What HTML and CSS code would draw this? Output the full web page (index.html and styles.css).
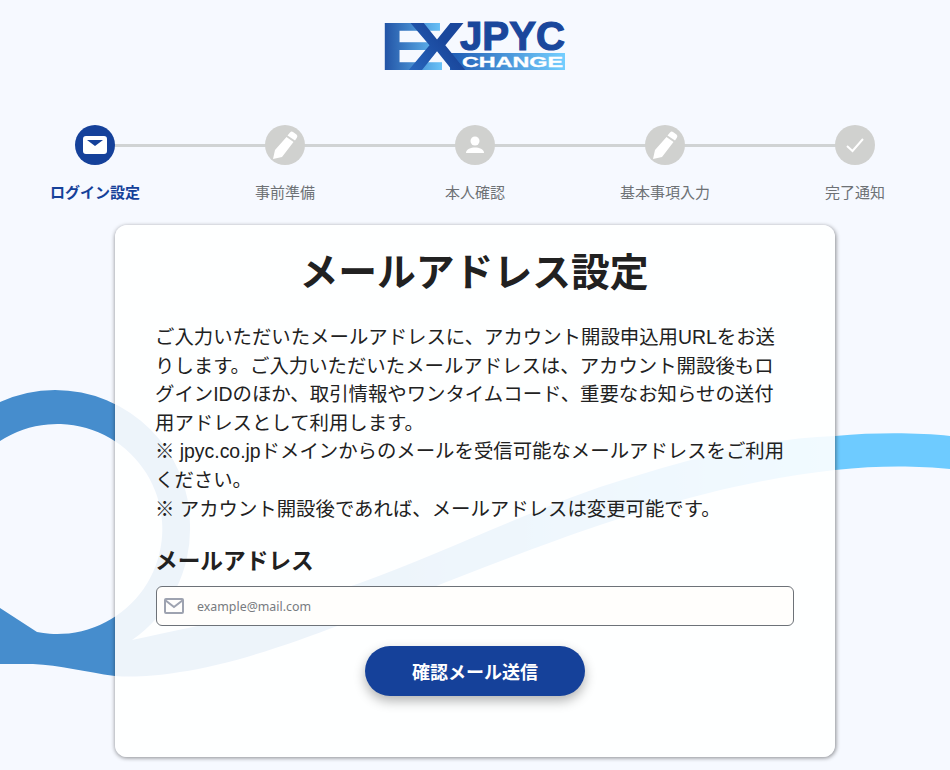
FILE: index.html
```html
<!DOCTYPE html>
<html lang="ja">
<head>
    <meta charset="UTF-8">
    <meta name="viewport" content="width=device-width, initial-scale=1.0">
    <title>メールアドレス設定</title>
    <link rel="stylesheet" href="styles.css">
</head>
<body>
    <svg class="swirl" width="950" height="770" viewBox="0 0 950 770">
        <defs>
            <linearGradient id="swirlFill" gradientUnits="userSpaceOnUse" x1="300" y1="0" x2="835" y2="0">
                <stop offset="0" stop-color="#468dcd"/>
                <stop offset="1" stop-color="#6ecbff"/>
            </linearGradient>
        </defs>
        <path fill="url(#swirlFill)" fill-rule="evenodd" d="M0 402A135 135 0 0 1 55 390A135 135 0 0 1 190 525A135 135 0 0 1 132 640C200 625 290 608 360 583C440 554 520 515 600 487C680 462 760 438 835 436C880 432 920 433 950 436V469C920 466 880 465 835 470C760 478 680 498 600 525C520 552 420 592 340 625C290 644 230 665 180 672C150 677 130 677 115 676C85 672 60 665 33 664L0 664ZM0 441A105 105 0 1 1 37 632L0 608Z"/>
    </svg>

    <div class="logo">
        <svg width="200" height="90" viewBox="0 0 200 90">
            <defs>
                <linearGradient id="eFill" x1="0" x2="1" y1="0" y2="0">
                    <stop offset="0" stop-color="#1a479c"/>
                    <stop offset="1" stop-color="#6ecbff"/>
                </linearGradient>
                <linearGradient id="xFill" x1="0" x2="1" y1="1" y2="0">
                    <stop offset="0" stop-color="#2a6cc4"/>
                    <stop offset="0.6" stop-color="#1a479c"/>
                </linearGradient>
                <linearGradient id="barFill" x1="0" x2="1" y1="0" y2="0">
                    <stop offset="0" stop-color="#1f5cb4"/>
                    <stop offset="1" stop-color="#74cfff"/>
                </linearGradient>
            </defs>
            <rect x="75" y="53" width="115" height="17" fill="url(#barFill)"/>
            <text class="logo-ex" x="3" y="70" textLength="68" lengthAdjust="spacingAndGlyphs" fill="url(#eFill)">E</text>
            <text class="logo-ex" x="33" y="70" textLength="58" lengthAdjust="spacingAndGlyphs" fill="url(#xFill)">X</text>
            <text class="logo-jpyc" x="85" y="50" textLength="105" lengthAdjust="spacingAndGlyphs">JPYC</text>
            <text class="logo-change" x="87" y="67" textLength="101" lengthAdjust="spacingAndGlyphs">CHANGE</text>
        </svg>
    </div>

    <div class="steps">
        <div class="step step-active">
            <div class="step-circle">
                <svg width="24" height="24" viewBox="0 0 24 24"><path fill="#fff" d="M3 3H21Q24 3 24 6V18Q24 21 21 21H3Q0 21 0 18V6Q0 3 3 3ZM4 7L12 13L20 7Z"/></svg>
            </div>
            <span class="step-label">ログイン設定</span>
        </div>
        <div class="step">
            <div class="step-circle">
                <svg width="26" height="28" viewBox="0 0 26 28"><path fill="#fff" d="M18 1.500Q19.500 0 21 1L24.500 3.500Q26 5 25 6.500L23 9.500L15.500 4.500ZM14.500 6L21.500 11L10 26L1 28L3 19Z"/></svg>
            </div>
            <span class="step-label">事前準備</span>
        </div>
        <div class="step">
            <div class="step-circle">
                <svg width="22" height="22" viewBox="0 0 22 22"><circle fill="#fff" cx="11" cy="7" r="4.500"/><path fill="#fff" d="M2 19C2 15 7 13.500 11 13.500C15 13.500 20 15 20 19Z"/></svg>
            </div>
            <span class="step-label">本人確認</span>
        </div>
        <div class="step">
            <div class="step-circle">
                <svg width="26" height="28" viewBox="0 0 26 28"><path fill="#fff" d="M18 1.500Q19.500 0 21 1L24.500 3.500Q26 5 25 6.500L23 9.500L15.500 4.500ZM14.500 6L21.500 11L10 26L1 28L3 19Z"/></svg>
            </div>
            <span class="step-label">基本事項入力</span>
        </div>
        <div class="step">
            <div class="step-circle">
                <svg width="22" height="22" viewBox="0 0 22 22"><path fill="none" stroke="#fff" stroke-width="2" d="M3 12L8.500 17L19 5"/></svg>
            </div>
            <span class="step-label">完了通知</span>
        </div>
    </div>

    <div class="card">
        <h1 class="card-title">メールアドレス設定</h1>
        <p class="card-text">ご入力いただいたメールアドレスに、アカウント開設申込用URLをお送りします。ご入力いただいたメールアドレスは、アカウント開設後もログインIDのほか、取引情報やワンタイムコード、重要なお知らせの送付用アドレスとして利用します。<br>※ jpyc.co.jpドメインからのメールを受信可能なメールアドレスをご利用ください。<br>※ アカウント開設後であれば、メールアドレスは変更可能です。</p>
        <label class="field-label" for="email">メールアドレス</label>
        <div class="field">
            <svg class="field-icon" width="20" height="16" viewBox="0 0 20 16"><rect x="1" y="1" width="18" height="14" rx="1" fill="none" stroke="#9ea3b0" stroke-width="2"/><path fill="none" stroke="#9ea3b0" stroke-width="2" d="M1 2L10 9L19 2"/></svg>
            <input class="field-input" id="email" type="text" placeholder="example@mail.com">
        </div>
        <button class="submit-button">確認メール送信</button>
    </div>
</body>
</html>
```

FILE: styles.css
```css
* {
    margin: 0;
    padding: 0;
    box-sizing: border-box;
    font-family: "Liberation Sans", "Noto Sans CJK JP", sans-serif;
}
html, body {
    height: 770px;
    overflow: hidden;
}
body {
    position: relative;
    background-color: #f6f9ff;
    display: flex;
    flex-direction: column;
    align-items: center;
}
.swirl {
    position: absolute;
    left: 0;
    top: 0;
}
.logo {
    position: relative;
    height: 90px;
    margin-bottom: 35px;
}
.logo svg {
    display: block;
}
.logo-ex {
    font-size: 69px;
    font-weight: bold;
}
.logo-jpyc {
    font-size: 41px;
    font-weight: bold;
    fill: #1a479c;
    stroke: #1a479c;
    stroke-width: 1.2px;
}
.logo-change {
    font-size: 15px;
    font-weight: bold;
    fill: #fff;
    stroke: #fff;
    stroke-width: 0.3px;
}
.steps {
    position: relative;
    display: grid;
    grid-template-columns: repeat(5, 190px);
    width: 950px;
}
.step {
    position: relative;
    display: flex;
    flex-direction: column;
    align-items: center;
    gap: 17px;
}
.step:not(:last-child)::after {
    content: "";
    position: absolute;
    left: 50%;
    top: 19px;
    width: 190px;
    height: 3px;
    background-color: #d0d3d4;
}
.step-circle {
    position: relative;
    z-index: 1;
    width: 40px;
    height: 40px;
    border-radius: 50%;
    background-color: #d0d1cf;
    display: flex;
    align-items: center;
    justify-content: center;
}
.step-label {
    font-family: "Noto Sans CJK JP", sans-serif;
    font-size: 15px;
    line-height: 20px;
    color: #6d7175;
}
.step-active .step-circle {
    background-color: #15419a;
}
.step-active .step-label {
    font-weight: bold;
    color: #15419a;
}
.card {
    position: relative;
    width: 720px;
    height: 532px;
    margin-top: 23px;
    padding: 20px 40px 0;
    background-color: rgba(255, 255, 255, 0.9);
    border-radius: 12px;
    box-shadow: 0.5px 1px 4px rgba(0, 0, 0, 0.45);
}
.card-title {
    padding-right: 2px;
    font-size: 38.800px;
    line-height: 56px;
    font-weight: bold;
    text-align: center;
    color: #212121;
    margin-bottom: 22px;
}
.card-text {
    padding-right: 7px;
    font-size: 19.400px;
    line-height: 28.600px;
    color: #212121;
    margin-bottom: 22px;
}
.field-label {
    display: block;
    font-size: 22.700px;
    line-height: 32px;
    font-weight: bold;
    color: #212121;
    margin-bottom: 9px;
}
.field {
    position: relative;
    width: 638px;
    height: 40px;
    margin: 0 auto;
}
.field-icon {
    position: absolute;
    left: 8px;
    top: 12px;
}
.field-input {
    width: 100%;
    height: 100%;
    padding-left: 40px;
    background-color: #fffefc;
    border: 1px solid #6d7278;
    border-radius: 6px;
    font-family: "Noto Sans", sans-serif;
    font-size: 12.400px;
}
.field-input::placeholder {
    color: #777b80;
    opacity: 1;
}
.submit-button {
    display: block;
    width: 220px;
    height: 50px;
    margin: 20px auto 0;
    background-color: #15419a;
    border: none;
    border-radius: 25px;
    box-shadow: 0 5px 12px rgba(0, 0, 0, 0.3);
    color: #fff;
    font-family: "Noto Sans CJK JP", sans-serif;
    font-size: 18px;
    font-weight: bold;
}
```
